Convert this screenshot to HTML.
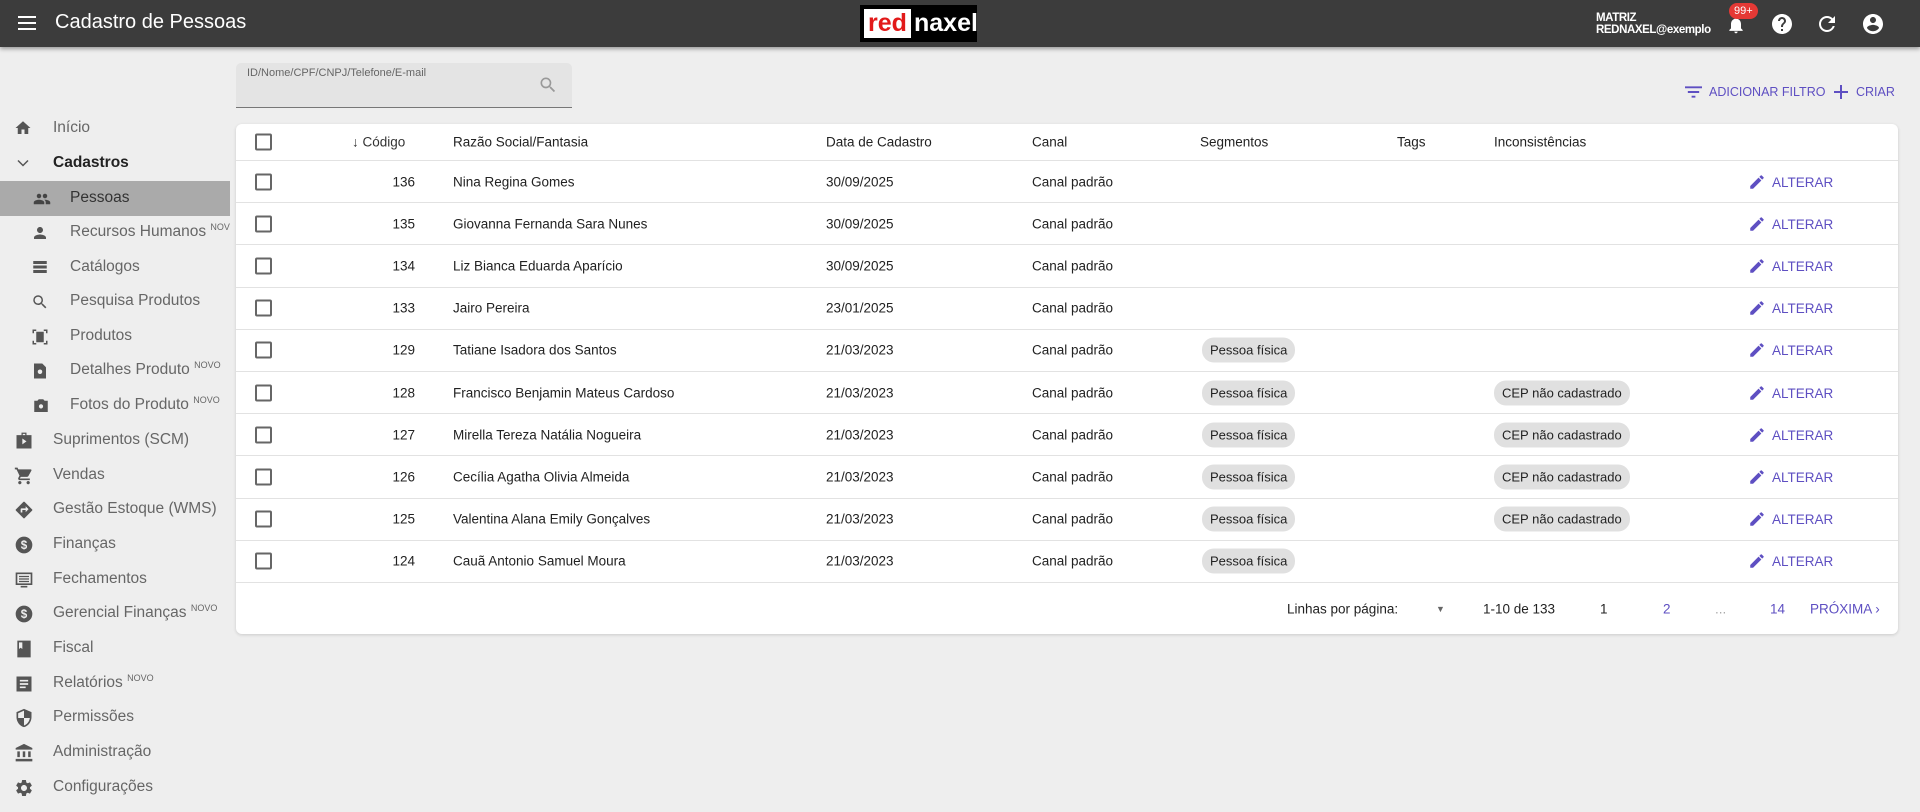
<!DOCTYPE html>
<html><head><meta charset="utf-8">
<style>
*{margin:0;padding:0;box-sizing:border-box}
body{width:1920px;height:812px;background:#eeeeee;font-family:"Liberation Sans",sans-serif;position:relative;overflow:hidden;color:#222}
.top{position:absolute;left:0;top:0;width:1920px;height:47px;background:#3c3c3c;box-shadow:0 2px 4px rgba(0,0,0,.35)}
.abs{position:absolute}
.side{font-size:15.5px;color:#666;letter-spacing:0}
.side .it{position:absolute;height:34px;line-height:34px;white-space:nowrap}
.side svg{position:absolute;fill:#555}
sup{font-size:9px;line-height:0;position:relative;top:-6px;vertical-align:baseline;letter-spacing:0}
.card{position:absolute;left:236px;top:124px;width:1662px;height:510px;background:#fff;border-radius:6px;box-shadow:0 1px 3px rgba(0,0,0,.15)}
.row{position:absolute;left:0;width:1662px;border-bottom:1px solid #e2e2e2;font-size:13.5px;color:#222}
.row span{position:absolute;top:50%;transform:translateY(-50%);white-space:nowrap}
.cb{width:17px;height:17px;border:2px solid #666;border-radius:2px}
.chip{background:#e0e0e0;border-radius:12px;padding:5px 8px;font-size:13px}
.alt{color:#5e4fc2}
.purple{color:#5e4fc2}
</style></head><body>
<div class="top">
 <svg class="abs" style="left:18px;top:15px" width="18" height="16"><rect y="1" width="18" height="2" fill="#fff"/><rect y="7" width="18" height="2" fill="#fff"/><rect y="13" width="18" height="2" fill="#fff"/></svg>
 <div class="abs" style="left:55px;top:11px;color:#fff;font-size:20px">Cadastro de Pessoas</div>
 <div class="abs" style="left:860px;top:5px;width:117px;height:37px;background:#000"></div>
 <div class="abs" style="left:864px;top:9px;width:47px;height:29px;background:#fff"></div>
 <div class="abs" style="left:864px;top:9px;font-size:25px;font-weight:bold;color:#e21a1a;line-height:29px;width:47px;text-align:center">red</div>
 <div class="abs" style="left:914px;top:9px;font-size:25px;font-weight:bold;color:#fff;line-height:29px">naxel</div>
 <div class="abs" style="left:1596px;top:12px;color:#fff;font-size:11.5px;font-weight:bold;line-height:12px;letter-spacing:-.4px">MATRIZ<br>REDNAXEL@exemplo</div>
 <svg class="abs" style="left:1726px;top:14px" width="20" height="22" viewBox="0 0 24 24"><path fill="#fff" d="M12 22c1.1 0 2-.9 2-2h-4c0 1.1.9 2 2 2zm6-6v-5c0-3.07-1.64-5.64-4.5-6.32V4c0-.83-.67-1.5-1.5-1.5s-1.5.67-1.5 1.5v.68C7.630 5.36 6 7.92 6 11v5l-2 2v1h16v-1l-2-2z"/></svg>
 <div class="abs" style="left:1729px;top:3px;background:#e53935;color:#fff;font-size:11px;border-radius:9px;padding:2px 5px">99+</div>
 <svg class="abs" style="left:1770px;top:12px" width="24" height="24" viewBox="0 0 24 24"><path fill="#fff" d="M12 2C6.48 2 2 6.48 2 12s4.48 10 10 10 10-4.48 10-10S17.52 2 12 2zm1 17h-2v-2h2v2zm2.07-7.750l-.9.92C13.45 12.9 13 13.5 13 15h-2v-.5c0-1.1.45-2.1 1.17-2.83l1.24-1.26c.37-.36.59-.86.59-1.41 0-1.1-.9-2-2-2s-2 .9-2 2H8c0-2.21 1.79-4 4-4s4 1.79 4 4c0 .88-.36 1.68-.93 2.25z"/></svg>
 <svg class="abs" style="left:1815px;top:12px" width="24" height="24" viewBox="0 0 24 24"><path fill="#fff" d="M17.65 6.35C16.2 4.9 14.21 4 12 4c-4.42 0-7.99 3.58-7.99 8s3.57 8 7.990 8c3.73 0 6.84-2.55 7.73-6h-2.08c-.82 2.33-3.04 4-5.65 4-3.31 0-6-2.69-6-6s2.69-6 6-6c1.66 0 3.14.69 4.22 1.78L13 11h7V4l-2.35 2.35z"/></svg>
 <svg class="abs" style="left:1861px;top:12px" width="24" height="24" viewBox="0 0 24 24"><path fill="#fff" d="M12 2C6.48 2 2 6.48 2 12s4.48 10 10 10 10-4.48 10-10S17.52 2 12 2zm0 3c1.66 0 3 1.34 3 3s-1.34 3-3 3-3-1.34-3-3 1.34-3 3-3zm0 14.2c-2.5 0-4.71-1.28-6-3.22.03-1.99 4-3.08 6-3.08 1.99 0 5.97 1.09 6 3.08-1.29 1.94-3.5 3.22-6 3.22z"/></svg>
</div>

<div class="side">
 <div class="abs" style="left:0;top:181px;width:230px;height:35px;background:#aaaaaa"></div>
 <svg style="left:14px;top:119px" width="18" height="18" viewBox="0 0 24 24"><path d="M10 20v-6h4v6h5v-8h3L12 3 2 12h3v8z"/></svg><div class="it" style="left:53px;top:111px">Início</div>
 <svg style="left:17px;top:157px" width="12" height="12" viewBox="0 0 24 24"><path d="M2 7l10 10 10-10" stroke="#555" stroke-width="3" fill="none"/></svg><div class="it" style="left:53px;top:146px;color:#222;font-weight:bold">Cadastros</div>
 <svg style="left:31px;top:190px" width="22" height="18" viewBox="0 0 24 24"><path fill="#444" d="M16 11c1.66 0 2.99-1.34 2.99-3S17.66 5 16 5c-1.66 0-3 1.34-3 3s1.34 3 3 3zm-8 0c1.66 0 2.99-1.34 2.99-3S9.66 5 8 5C6.34 5 5 6.34 5 8s1.34 3 3 3zm0 2c-2.33 0-7 1.17-7 3.5V19h14v-2.5c0-2.330-4.67-3.5-7-3.5zm8 0c-.29 0-.62.02-.97.05 1.16.84 1.97 1.97 1.97 3.45V19h6v-2.5c0-2.33-4.67-3.5-7-3.5z"/></svg><div class="it" style="left:70px;top:181px;color:#333">Pessoas</div>
 <svg style="left:31px;top:224px" width="18" height="18" viewBox="0 0 24 24"><path d="M12 12c2.21 0 4-1.79 4-4s-1.79-4-4-4-4 1.79-4 4 1.79 4 4 4zm0 2c-2.67 0-8 1.34-8 4v2h16v-2c0-2.66-5.33-4-8-4z"/></svg><div class="it" style="left:70px;top:215px">Recursos Humanos <sup>NOV</sup></div>
 <svg style="left:31px;top:258px" width="18" height="18" viewBox="0 0 24 24"><path d="M3 4h18v4H3zm0 6h18v4H3zm0 6h18v4H3z"/></svg><div class="it" style="left:70px;top:250px">Catálogos</div>
 <svg style="left:31px;top:293px" width="18" height="18" viewBox="0 0 24 24"><path d="M15.5 14h-.79l-.28-.27A6.47 6.47 0 0016 9.5 6.5 6.5 0 109.5 16c1.61 0 3.09-.59 4.23-1.57l.27.28v.79l5 4.99L20.49 19l-4.99-5zm-6 0C7.01 14 5 11.99 5 9.5S7.01 5 9.5 5 14 7.01 14 9.5 11.99 14 9.5 14z"/></svg><div class="it" style="left:70px;top:284px">Pesquisa Produtos</div>
 <svg style="left:31px;top:328px" width="18" height="18" viewBox="0 0 24 24"><path d="M2 2h5v2H4v3H2zm15 0h5v5h-2V4h-3zM2 17h2v3h3v2H2zm18 0h2v5h-5v-2h3zM7 5h10v14H7zm2 3h6v1.5H9zm0 3h6v1.5H9zm0 3h6v1.5H9z"/></svg><div class="it" style="left:70px;top:319px">Produtos</div>
 <svg style="left:31px;top:362px" width="18" height="18" viewBox="0 0 24 24"><path d="M4 2h11l5 5v15H4z"/><circle cx="12" cy="13" r="3" fill="#eee"/></svg><div class="it" style="left:70px;top:353px">Detalhes Produto <sup>NOVO</sup></div>
 <svg style="left:31px;top:397px" width="20" height="18" viewBox="0 0 24 24"><path d="M9 3L7.2 5H3v15h18V5h-4.2L15 3z"/><circle cx="12" cy="12.5" r="2.8" fill="#eee"/></svg><div class="it" style="left:70px;top:388px">Fotos do Produto <sup>NOVO</sup></div>
 <svg style="left:14px;top:431px" width="20" height="20" viewBox="0 0 24 24"><path d="M9 2h6v3h6v16H3V5h6zm1.5 1.5V5h3V3.5zM10 9v7l5-3.5z"/></svg><div class="it" style="left:53px;top:423px">Suprimentos (SCM)</div>
 <svg style="left:14px;top:466px" width="20" height="20" viewBox="0 0 24 24"><path d="M7 18c-1.1 0-2 .9-2 2s.9 2 2 2 2-.9 2-2-.9-2-2-2zM1 2v2h2l3.6 7.59-1.35 2.45C4.52 15.37 5.48 17 7 17h12v-2H7l1.1-2h7.45c.75 0 1.41-.41 1.75-1.03l3.58-6.49A1 1 0 0020 4H5.21l-.94-2zm16 16c-1.1 0-2 .9-2 2s.9 2 2 2 2-.9 2-2-.9-2-2-2z"/></svg><div class="it" style="left:53px;top:458px">Vendas</div>
 <svg style="left:14px;top:500px" width="20" height="20" viewBox="0 0 24 24"><path d="M21.7 11.3l-9-9a1 1 0 00-1.4 0l-9 9a1 1 0 000 1.4l9 9a1 1 0 001.4 0l9-9a1 1 0 000-1.4zM14 14.5V12h-4v3H8v-4a1 1 0 011-1h5V7.5l3.5 3.5z"/></svg><div class="it" style="left:53px;top:492px">Gestão Estoque (WMS)</div>
 <svg style="left:14px;top:535px" width="20" height="20" viewBox="0 0 24 24"><circle cx="12" cy="12" r="10"/><text x="12" y="17" font-size="14" font-weight="bold" text-anchor="middle" fill="#eee" font-family="Liberation Sans">$</text></svg><div class="it" style="left:53px;top:527px">Finanças</div>
 <svg style="left:14px;top:570px" width="20" height="20" viewBox="0 0 24 24"><path d="M2 3h20v15H2zm2 2v11h16V5zM6 7h12v1.5H6zm0 3h12v1.5H6zm0 3h12v1.5H6zM8 19h8v2H8z"/></svg><div class="it" style="left:53px;top:562px">Fechamentos</div>
 <svg style="left:14px;top:604px" width="20" height="20" viewBox="0 0 24 24"><circle cx="12" cy="12" r="10"/><text x="12" y="17" font-size="14" font-weight="bold" text-anchor="middle" fill="#eee" font-family="Liberation Sans">$</text></svg><div class="it" style="left:53px;top:596px">Gerencial Finanças <sup>NOVO</sup></div>
 <svg style="left:14px;top:639px" width="20" height="20" viewBox="0 0 24 24"><path d="M4 2h16v20H4zm2 2v8l2-1.5 2 1.5V4z"/></svg><div class="it" style="left:53px;top:631px">Fiscal</div>
 <svg style="left:14px;top:674px" width="20" height="20" viewBox="0 0 24 24"><path d="M3 3h18v18H3zm4 4v2h10V7zm0 4v2h10v-2zm0 4v2h7v-2z"/></svg><div class="it" style="left:53px;top:666px">Relatórios <sup>NOVO</sup></div>
 <svg style="left:14px;top:708px" width="20" height="20" viewBox="0 0 24 24"><path d="M12 1L3 5v6c0 5.55 3.84 10.74 9 12 5.16-1.26 9-6.45 9-12V5zm0 11h7c-.53 4.12-3.28 7.79-7 8.94V12H5V6.3l7-3.11z"/></svg><div class="it" style="left:53px;top:700px">Permissões</div>
 <svg style="left:14px;top:743px" width="20" height="20" viewBox="0 0 24 24"><path d="M4 10h3v7H4zm6.5 0h3v7h-3zM2 19h20v3H2zm15-9h3v7h-3zM12 1L2 6v2h20V6z"/></svg><div class="it" style="left:53px;top:735px">Administração</div>
 <svg style="left:14px;top:778px" width="20" height="20" viewBox="0 0 24 24"><path d="M19.14 12.94c.04-.3.06-.61.06-.94 0-.32-.02-.64-.07-.94l2.03-1.58a.49.49 0 00.12-.61l-1.92-3.32a.488.488 0 00-.59-.22l-2.39.96c-.5-.38-1.03-.7-1.62-.94l-.36-2.54a.484.484 0 00-.48-.41h-3.84c-.24 0-.43.17-.47.41l-.36 2.54c-.59.24-1.13.57-1.62.94l-2.39-.96c-.22-.08-.47 0-.59.22L2.74 8.87c-.12.21-.08.47.12.61l2.03 1.58c-.05.3-.09.63-.09.94s.02.64.07.94l-2.03 1.58a.49.49 0 00-.12.61l1.92 3.32c.12.22.37.29.59.22l2.39-.96c.5.38 1.03.7 1.62.94l.36 2.54c.05.24.24.41.48.41h3.84c.24 0 .44-.17.47-.41l.36-2.54c.59-.24 1.13-.56 1.62-.94l2.39.96c.22.08.47 0 .59-.22l1.92-3.32c.12-.22.07-.47-.12-.61l-2.01-1.58zM12 15.6c-1.98 0-3.6-1.62-3.6-3.6s1.62-3.6 3.6-3.6 3.6 1.62 3.6 3.6-1.62 3.6-3.6 3.6z"/></svg><div class="it" style="left:53px;top:770px">Configurações</div>
</div>

<div class="abs" style="left:236px;top:63px;width:336px;height:45px;background:#e4e4e4;border-radius:5px 5px 0 0;border-bottom:1px solid #777"></div>
<div class="abs" style="left:247px;top:67px;font-size:11px;color:#666">ID/Nome/CPF/CNPJ/Telefone/E-mail</div>
<svg class="abs" style="left:538px;top:75px" width="20" height="20" viewBox="0 0 24 24"><path fill="#999" d="M15.5 14h-.79l-.28-.27A6.47 6.47 0 0016 9.5 6.5 6.5 0 109.5 16c1.61 0 3.09-.59 4.23-1.57l.27.28v.79l5 4.99L20.49 19l-4.99-5zm-6 0C7.01 14 5 11.990 5 9.5S7.01 5 9.5 5 14 7.01 14 9.5 11.99 14 9.5 14z"/></svg>

<svg class="abs" style="left:1685px;top:85px" width="17" height="14" viewBox="0 0 18 14"><path fill="#5e4fc2" d="M0 1h18v2H0zm3 5h12v2H3zm4 5h4v2H7z"/></svg>
<div class="abs purple" style="left:1709px;top:85px;font-size:12.5px">ADICIONAR FILTRO</div>
<svg class="abs" style="left:1834px;top:85px" width="14" height="14" viewBox="0 0 14 14"><path fill="#5e4fc2" d="M6 0h2v6h6v2H8v6H6V8H0V6h6z"/></svg>
<div class="abs purple" style="left:1856px;top:85px;font-size:12.5px">CRIAR</div>

<div class="card">
 <div class="row" style="top:0;height:37px">
  <span class="cb" style="left:19px"></span>
  <span style="left:116px;color:#333">↓ Código</span>
  <span style="left:217px">Razão Social/Fantasia</span>
  <span style="left:590px">Data de Cadastro</span>
  <span style="left:796px">Canal</span>
  <span style="left:964px">Segmentos</span>
  <span style="left:1161px">Tags</span>
  <span style="left:1258px">Inconsistências</span>
 </div>
 <div id="rows"></div>
 <div class="row" style="top:459px;height:51px;border:none;font-size:13.5px">
  <span style="left:1051px">Linhas por página:</span>
  <span style="left:1200px;font-size:9px;color:#666">▼</span>
  <span style="left:1247px">1-10 de 133</span>
  <span style="left:1364px">1</span>
  <span style="left:1427px" class="purple">2</span>
  <span style="left:1479px;color:#aaa">...</span>
  <span style="left:1534px" class="purple">14</span>
  <span style="left:1574px" class="purple">PRÓXIMA ›</span>
 </div>
</div>
<script>
var d=[["136","Nina Regina Gomes","30/09/2025",0,0],["135","Giovanna Fernanda Sara Nunes","30/09/2025",0,0],["134","Liz Bianca Eduarda Aparício","30/09/2025",0,0],["133","Jairo Pereira","23/01/2025",0,0],["129","Tatiane Isadora dos Santos","21/03/2023",1,0],["128","Francisco Benjamin Mateus Cardoso","21/03/2023",1,1],["127","Mirella Tereza Natália Nogueira","21/03/2023",1,1],["126","Cecília Agatha Olivia Almeida","21/03/2023",1,1],["125","Valentina Alana Emily Gonçalves","21/03/2023",1,1],["124","Cauã Antonio Samuel Moura","21/03/2023",1,0]];
var h="";
d.forEach(function(r,i){
 h+='<div class="row" style="top:'+(37+i*42.2)+'px;height:42.2px"><span class="cb" style="left:19px"></span><span style="left:143px;width:36px;text-align:right">'+r[0]+'</span><span style="left:217px">'+r[1]+'</span><span style="left:590px">'+r[2]+'</span><span style="left:796px">Canal padrão</span>'+(r[3]?'<span class="chip" style="left:966px">Pessoa física</span>':'')+(r[4]?'<span class="chip" style="left:1258px">CEP não cadastrado</span>':'')+'<span style="left:1512px" class="alt"><svg width="18" height="18" viewBox="0 0 24 24" style="vertical-align:-4px;margin-right:6px"><path fill="#5e4fc2" d="M3 17.25V21h3.75L17.81 9.94l-3.75-3.75zM20.71 7.04a1 1 0 000-1.41l-2.34-2.34a1 1 0 00-1.410 0l-1.83 1.83 3.75 3.75z"/></svg>ALTERAR</span></div>';
});
document.getElementById("rows").innerHTML=h;
</script>
</body></html>
